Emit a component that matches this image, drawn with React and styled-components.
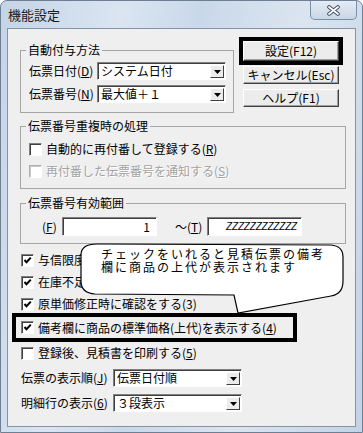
import React from 'react'
import styled, { createGlobalStyle } from 'styled-components'

const GlobalStyle = createGlobalStyle`
  html, body { margin: 0; padding: 0; background: #fff; }
  body {
    font-family: "Noto Sans CJK JP", "Noto Sans", sans-serif;
    font-size: 12px;
    color: #000;
  }
`

const Window = styled.div`
  position: relative;
  width: 363px;
  height: 433px;
  box-sizing: border-box;
  display: flex;
  flex-direction: column;
  border: 1px solid #6f7f93;
  border-radius: 7px 7px 0 0;
  background: linear-gradient(100deg, #c4d4e7 0%, #dae5f1 28%, #c9d8e9 46%, #dbe5f0 70%, #c3d3e6 100%);
`

const TitleBar = styled.div`
  display: flex;
  align-items: flex-start;
  height: 27px;
  padding-left: 7px;
`

const Title = styled.span`
  font-size: 13px;
  line-height: 27px;
  color: #1b1b1b;
`

const CloseButton = styled.div`
  margin-left: auto;
  margin-right: 5px;
  width: 47px;
  height: 19px;
  box-sizing: border-box;
  border: 1px solid #7d8da3;
  border-top: none;
  border-radius: 0 0 5px 5px;
  background: linear-gradient(#e4ecf5, #c9d6e6);
  display: flex;
  align-items: center;
  justify-content: center;
`

const Client = styled.div`
  flex: 1;
  margin: 0 6px 5px 6px;
  border: 1px solid #8393a8;
  background: #efefef;
  display: flex;
  flex-direction: column;
`

const TopRow = styled.div`
  display: flex;
  align-items: flex-start;
`

const Group = styled.fieldset`
  margin: ${p => p.$mt}px 0 0 12px;
  width: ${p => p.$w}px;
  box-sizing: border-box;
  border: 1px solid #a5a5a5;
  padding: 0;
  min-inline-size: 0;
`

const Legend = styled.legend`
  margin-left: 5px;
  padding: 0 2px;
  font-size: 12px;
  line-height: 14px;
`

const GroupBody = styled.div`
  display: flex;
  flex-direction: column;
  gap: ${p => p.$gap || 0}px;
  padding: ${p => p.$pad};
`

const FieldRow = styled.div`
  display: flex;
  align-items: center;
  height: ${p => p.$h || 18}px;
`

const FieldLabel = styled.span`
  width: ${p => p.$w}px;
  margin-left: ${p => p.$ml || 0}px;
  flex-shrink: 0;
  white-space: nowrap;
  line-height: 14px;
`

const Key = styled.span`
  text-decoration: underline;
`

const Combo = styled.div`
  width: 129px;
  height: 18px;
  box-sizing: border-box;
  border: 1px solid;
  border-color: #808080 #ffffff #ffffff #808080;
  box-shadow: inset 1px 1px 0 #404040;
  background: #fff;
  display: flex;
  align-items: center;
  padding: 0 1px 0 3px;
`

const ComboText = styled.span`
  flex: 1;
  line-height: 14px;
  white-space: nowrap;
`

const ArrowBox = styled.span`
  width: 14px;
  height: 13px;
  margin-top: 1px;
  box-sizing: border-box;
  border: 1px solid;
  border-color: #ffffff #404040 #404040 #ffffff;
  background: #ececec;
  display: flex;
  align-items: center;
  justify-content: center;
`

const ButtonColumn = styled.div`
  display: flex;
  flex-direction: column;
  align-items: flex-start;
  margin: 8px 0 0 5px;
`

const FocusRing = styled.div`
  border: 4px solid #000;
  margin-bottom: 1px;
`

const Button = styled.div`
  width: 96px;
  height: ${p => p.$h || 18}px;
  margin-left: ${p => p.$ml || 0}px;
  margin-bottom: ${p => p.$mb || 0}px;
  box-sizing: border-box;
  border: 1px solid;
  border-color: #ffffff #404040 #404040 #ffffff;
  box-shadow: inset -1px -1px 0 #a0a0a0;
  background: #ececec;
  display: flex;
  align-items: center;
  justify-content: center;
  line-height: 14px;
  white-space: nowrap;
`

const CheckRow = styled.div`
  display: flex;
  align-items: center;
  gap: 4px;
  height: ${p => p.$h || 22}px;
  padding-left: ${p => p.$indent || 0}px;
  color: ${p => (p.$disabled ? '#a2a2a2' : '#000')};
  text-shadow: ${p => (p.$disabled ? '1px 1px 0 #fff' : 'none')};
  line-height: 14px;
  white-space: nowrap;
`

const Box = styled.span`
  width: 13px;
  height: 13px;
  flex-shrink: 0;
  box-sizing: border-box;
  border: 1px solid;
  border-color: ${p => (p.$disabled ? '#b0b0b0 #fff #fff #b0b0b0' : '#808080 #fff #fff #808080')};
  box-shadow: inset 1px 1px 0 ${p => (p.$disabled ? '#c8c8c8' : '#404040')};
  background: #fff;
  display: flex;
  align-items: center;
  justify-content: center;
`

const CheckList = styled.div`
  display: flex;
  flex-direction: column;
  margin-top: 5px;
`

const HighlightRow = styled.div`
  margin: -2px 0 0 4px;
  width: 285px;
  box-sizing: border-box;
  border: 4px solid #000;
`

const Input = styled.div`
  width: 95px;
  height: 19px;
  box-sizing: border-box;
  border: 1px solid;
  border-color: #808080 #ffffff #ffffff #808080;
  box-shadow: inset 1px 1px 0 #404040;
  background: #fff;
  display: flex;
  align-items: center;
  justify-content: flex-end;
  padding-right: ${p => p.$pr || 6}px;
  font-family: ${p => (p.$small ? '"Liberation Sans", sans-serif' : 'inherit')};
  font-size: ${p => (p.$small ? 10 : 12)}px;
  font-style: ${p => (p.$small ? 'italic' : 'normal')};
  letter-spacing: ${p => (p.$small ? '-0.2px' : '0')};
  line-height: 14px;
`

const SelectList = styled.div`
  display: flex;
  flex-direction: column;
  gap: 7px;
  margin-top: 5px;
  padding-left: 13px;
`

const Callout = styled.div`
  position: absolute;
  left: 78px;
  top: 240px;
  width: 270px;
  height: 76px;
  box-sizing: border-box;
  padding: 6px 0 0 22px;
`

const CalloutShape = styled.svg`
  position: absolute;
  left: 0;
  top: 0;
`

const CalloutText = styled.p`
  position: relative;
  margin: 0;
  font-size: 12px;
  line-height: 13px;
  letter-spacing: 2px;
  white-space: nowrap;
`

function Arrow() {
  return (
    <ArrowBox>
      <svg width="7" height="4" viewBox="0 0 7 4">
        <path d="M0 0H7L3.5 4Z" fill="#000" />
      </svg>
    </ArrowBox>
  )
}

function Select({ label, value, labelWidth }) {
  return (
    <FieldRow>
      <FieldLabel $w={labelWidth}>{label}</FieldLabel>
      <Combo>
        <ComboText>{value}</ComboText>
        <Arrow />
      </Combo>
    </FieldRow>
  )
}

function Check({ checked, disabled, children, indent, h }) {
  return (
    <CheckRow $indent={indent} $disabled={disabled} $h={h}>
      <Box $disabled={disabled}>
        {checked && (
          <svg width="9" height="9" viewBox="0 0 9 9">
            <polyline points="1.5,4 3.5,6.2 7.8,1.6" fill="none" stroke="#000" strokeWidth="2" />
          </svg>
        )}
      </Box>
      <span>{children}</span>
    </CheckRow>
  )
}

export default function App() {
  return (
    <>
      <GlobalStyle />
      <Window>
        <TitleBar>
          <Title>機能設定</Title>
          <CloseButton>
            <svg width="15" height="11" viewBox="0 0 15 11">
              <path d="M3 2L12 9M12 2L3 9" stroke="#3c4a5e" strokeWidth="3.6" strokeLinecap="round" />
              <path d="M3 2L12 9M12 2L3 9" stroke="#fff" strokeWidth="1.8" strokeLinecap="round" />
            </svg>
          </CloseButton>
        </TitleBar>

        <Client>
          <TopRow>
            <Group $mt={14} $w={214}>
              <Legend>自動付与方法</Legend>
              <GroupBody $gap={5} $pad="5px 0 9px 8px">
                <Select label={<>伝票日付(<Key>D</Key>)</>} value="システム日付" labelWidth={68} />
                <Select label={<>伝票番号(<Key>N</Key>)</>} value="最大値＋１" labelWidth={68} />
              </GroupBody>
            </Group>

            <ButtonColumn>
              <FocusRing>
                <Button $h={20}>設定(F12)</Button>
              </FocusRing>
              <Button $ml={4} $mb={5}>キャンセル(Esc)</Button>
              <Button $ml={4}>ヘルプ(F1)</Button>
            </ButtonColumn>
          </TopRow>

          <Group $mt={6} $w={326}>
            <Legend>伝票番号重複時の処理</Legend>
            <GroupBody $pad="5px 0 6px 8px">
              <Check>自動的に再付番して登録する(<Key>R</Key>)</Check>
              <Check disabled>再付番した伝票番号を通知する(<Key>S</Key>)</Check>
            </GroupBody>
          </Group>

          <Group $mt={7} $w={326}>
            <Legend>伝票番号有効範囲</Legend>
            <GroupBody $pad="7px 0 7px 21px">
              <FieldRow $h={19}>
                <FieldLabel $w={20}>(<Key>F</Key>)</FieldLabel>
                <Input>1</Input>
                <FieldLabel $w={32} $ml={18}>～(<Key>T</Key>)</FieldLabel>
                <Input $small $pr={4}>ZZZZZZZZZZZZ</Input>
              </FieldRow>
            </GroupBody>
          </Group>

          <CheckList>
            <Check checked indent={13}>与信限度額</Check>
            <Check checked indent={13}>在庫不足時</Check>
            <Check checked indent={13}>原単価修正時に確認をする(3)</Check>
            <HighlightRow>
              <Check checked indent={5} h={21}>備考欄に商品の標準価格(上代)を表示する(<Key>4</Key>)</Check>
            </HighlightRow>
            <Check indent={13}>登録後、見積書を印刷する(<Key>5</Key>)</Check>
          </CheckList>

          <SelectList>
            <Select label={<>伝票の表示順(<Key>J</Key>)</>} value="伝票日付順" labelWidth={92} />
            <Select label={<>明細行の表示(<Key>6</Key>)</>} value="３段表示" labelWidth={92} />
          </SelectList>
        </Client>

        <Callout>
          <CalloutShape width="270" height="76" viewBox="0 0 270 76">
            <path
              d="M2 14 Q2 3 18 3 L252 4 Q264 5 264 16 L264 40 Q264 53 252 55 L159 72 L155 54 L16 53 Q2 52 2 40 Z"
              fill="#fff"
              stroke="#000"
              strokeWidth="1.2"
            />
          </CalloutShape>
          <CalloutText>
            チェックをいれると見積伝票の備考
            <br />
            欄に商品の上代が表示されます
          </CalloutText>
        </Callout>
      </Window>
    </>
  )
}
